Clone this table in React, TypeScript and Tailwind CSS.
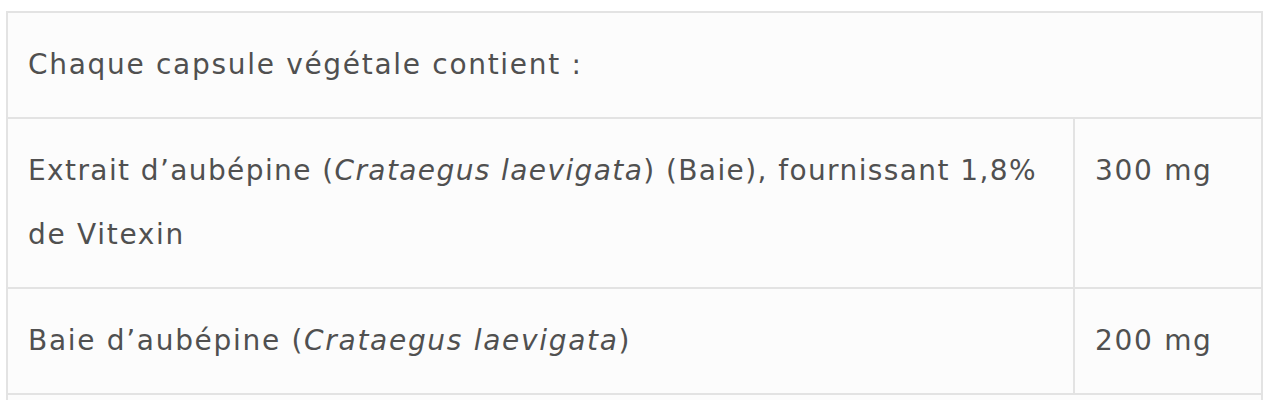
import React from "react";

type Row = {
  name: React.ReactNode;
  amount: string;
};

const rows: Row[] = [
  {
    name: (
      <>
        <span className="whitespace-nowrap tracking-[1.4px]">
          Extrait d’aubépine (<em>Crataegus laevigata</em>) (Baie), fournissant 1,8%
        </span>{" "}
        <br />
        de Vitexin
      </>
    ),
    amount: "300 mg",
  },
  {
    name: (
      <>
        Baie d’aubépine (<em>Crataegus laevigata</em>)
      </>
    ),
    amount: "200 mg",
  },
];

const App: React.FC = () => {
  return (
    <div
      className="min-h-[400px] bg-white pt-[11px] pl-[6px]"
      style={{ fontFamily: "'DejaVu Sans', sans-serif" }}
    >
      <table className="w-[1257px] table-fixed border-collapse bg-[#fcfcfc] text-[28px] font-normal tracking-[1.7px] text-[#505050]">
        <colgroup>
          <col />
          <col className="w-[188px]" />
        </colgroup>
        <tbody>
          {/* Header */}
          <tr>
            <td colSpan={2} className="border-2 border-[#e3e3e3] px-5 py-5 leading-[64px]">
              Chaque capsule végétale contient :
            </td>
          </tr>

          {rows.map((row, index) => (
            <tr key={index}>
              <td className="border-2 border-[#e3e3e3] px-5 py-5 align-top leading-[64px]">
                {row.name}
              </td>
              <td className="border-2 border-[#e3e3e3] px-5 py-5 align-top leading-[64px]">
                {row.amount}
              </td>
            </tr>
          ))}

          {/* Next row, cut off by the window */}
          <tr>
            <td colSpan={2} className="border-2 border-[#e3e3e3] px-5 py-5 leading-[64px]">
              &nbsp;
            </td>
          </tr>
        </tbody>
      </table>
    </div>
  );
};

export default App;
